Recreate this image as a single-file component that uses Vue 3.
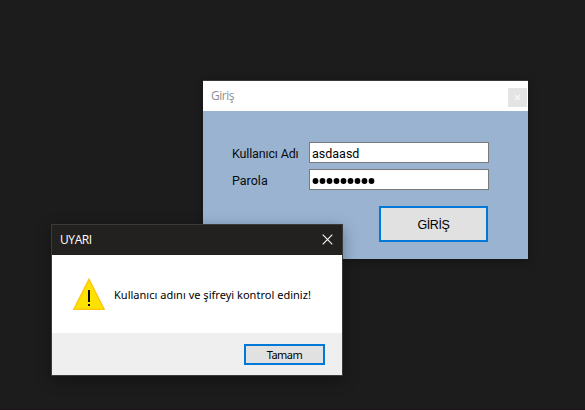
<script setup>
import { ref } from 'vue'

const username = ref('asdaasd')
const password = ref('●●●●●●●●●')
</script>

<template>
  <main class="desktop">
    <section class="window login">
      <header class="login-title">
        <span class="login-caption">Giriş</span>
        <button class="login-close" aria-label="Kapat">
          <svg width="7" height="7" viewBox="0 0 7 7"><path d="M1 1 6 6M6 1 1 6" /></svg>
        </button>
      </header>
      <form class="login-form" @submit.prevent>
        <label class="row">
          <span class="label user-label">Kullanıcı Adı</span>
          <span class="field">{{ username }}</span>
        </label>
        <label class="row">
          <span class="label">Parola</span>
          <span class="field">
            <svg class="mask" width="64" height="8" viewBox="0 0 64 8">
              <circle v-for="(c, i) in password" :key="i" :cx="3.5 + i * 7" cy="4" r="2.9" />
            </svg>
          </span>
        </label>
        <button class="submit"><span>GİRİŞ</span></button>
      </form>
    </section>

    <section class="window alert">
      <header class="alert-title">
        <span class="alert-caption">UYARI</span>
        <svg class="alert-close" width="11" height="11" viewBox="0 0 11 11"><path d="M.7.7 10.3 10.3M10.3.7.7 10.3" /></svg>
      </header>
      <div class="alert-body">
        <svg class="warning" width="32" height="32" viewBox="0 0 32 32">
          <path class="triangle" d="M16 1.2 31.2 31.3H.8Z" />
          <path class="mark" d="M15 12h2v12h-2zM15 26h2v2h-2z" />
        </svg>
        <span class="message">Kullanıcı adını ve şifreyi kontrol ediniz!</span>
      </div>
      <footer class="alert-footer">
        <button class="ok"><span>Tamam</span></button>
      </footer>
    </section>
  </main>
</template>

<style>
body {
  background: #1c1c1c;
  overflow: hidden;
}
</style>

<style scoped>
.desktop {
  position: relative;
  box-sizing: border-box;
  width: 585px;
  height: 410px;
  background: #1c1c1c;
  border-bottom: 1px solid #1c1318;
  overflow: hidden;
}
.desktop * {
  box-sizing: border-box;
}
.desktop button {
  padding: 0;
  margin: 0;
  border-radius: 0;
  display: flex;
  align-items: center;
  justify-content: center;
}
.window {
  position: absolute;
  display: flex;
  flex-direction: column;
  white-space: nowrap;
}
.login {
  left: 203px;
  top: 80px;
  width: 325px;
  height: 179px;
  border-top: 1px solid #3a3a3a;
  background: #99b3d1;
  box-shadow: 0 2px 9px rgba(0, 0, 0, 0.3);
}
.login-title {
  height: 30px;
  flex: none;
  display: flex;
  align-items: center;
  justify-content: space-between;
  padding: 0 1px 0 8px;
  background: #fff;
}
.login-caption {
  font: 12px/16px "Open Sans", sans-serif;
  letter-spacing: -0.5px;
  color: #8e8e8e;
}
.login-title .login-close {
  width: 19px;
  height: 19px;
  margin-top: 3px;
  border: 0;
  background: #e4e4e4;
}
.login-close path {
  stroke: #f5f5f5;
  stroke-width: 1.7;
}
.login-form {
  display: flex;
  flex-direction: column;
  gap: 6px;
  padding: 31px 39px 0 29px;
}
.row {
  display: flex;
  align-items: center;
  height: 21px;
}
.label {
  width: 77px;
  padding-top: 3px;
  font: 12.5px/16px Roboto, sans-serif;
  color: #090b0e;
}
.user-label {
  letter-spacing: -0.15px;
}
.field {
  width: 180px;
  height: 21px;
  display: flex;
  align-items: center;
  padding: 3px 2px 0;
  border: 1px solid #7a7a7a;
  background: #fff;
  font: 12.5px/16px Roboto, sans-serif;
  color: #000;
}
.login-form .submit {
  align-self: flex-end;
  width: 109px;
  height: 36px;
  margin: 10px 1px 0 0;
  border: 2px solid #0078d7;
  background: #e1e1e1;
  font: 12.5px/16px "Liberation Sans", sans-serif;
  letter-spacing: -0.4px;
  color: #000;
}
.submit span {
  padding-top: 2px;
}
.alert {
  left: 51px;
  top: 224px;
  width: 292px;
  height: 152px;
  border: 1px solid #3a3a3a;
  background: #fff;
  box-shadow: 0 4px 14px rgba(0, 0, 0, 0.35);
}
.alert-title {
  height: 30px;
  flex: none;
  display: flex;
  align-items: center;
  justify-content: space-between;
  padding: 0 9px 0 8px;
  background: #22211f;
}
.alert-caption {
  font: 12px/16px "Open Sans", sans-serif;
  letter-spacing: -0.4px;
  color: #fff;
}
.alert-close {
  margin-bottom: 2px;
}
.alert-close path {
  stroke: #f2f2f2;
  stroke-width: 1.2;
}
.alert-body {
  height: 78px;
  flex: none;
  display: flex;
  align-items: center;
  gap: 9px;
  padding: 0 0 1px 21px;
}
.triangle {
  fill: #fde100;
  stroke: #ffc20e;
  stroke-width: 1.3;
}
.message {
  padding-top: 2px;
  font: 11px/16px "Noto Sans", sans-serif;
  letter-spacing: 0.02px;
  color: #000;
}
.alert-footer {
  flex: 1;
  display: flex;
  align-items: center;
  justify-content: flex-end;
  padding-right: 17px;
  background: #efefef;
}
.alert-footer .ok {
  width: 81px;
  height: 21px;
  margin-top: 1px;
  border: 2px solid #0078d7;
  background: #e1e1e1;
  font: 11px/14px "Noto Sans", sans-serif;
  letter-spacing: -0.55px;
  color: #000;
}
.ok span {
  padding-top: 1px;
}
</style>
